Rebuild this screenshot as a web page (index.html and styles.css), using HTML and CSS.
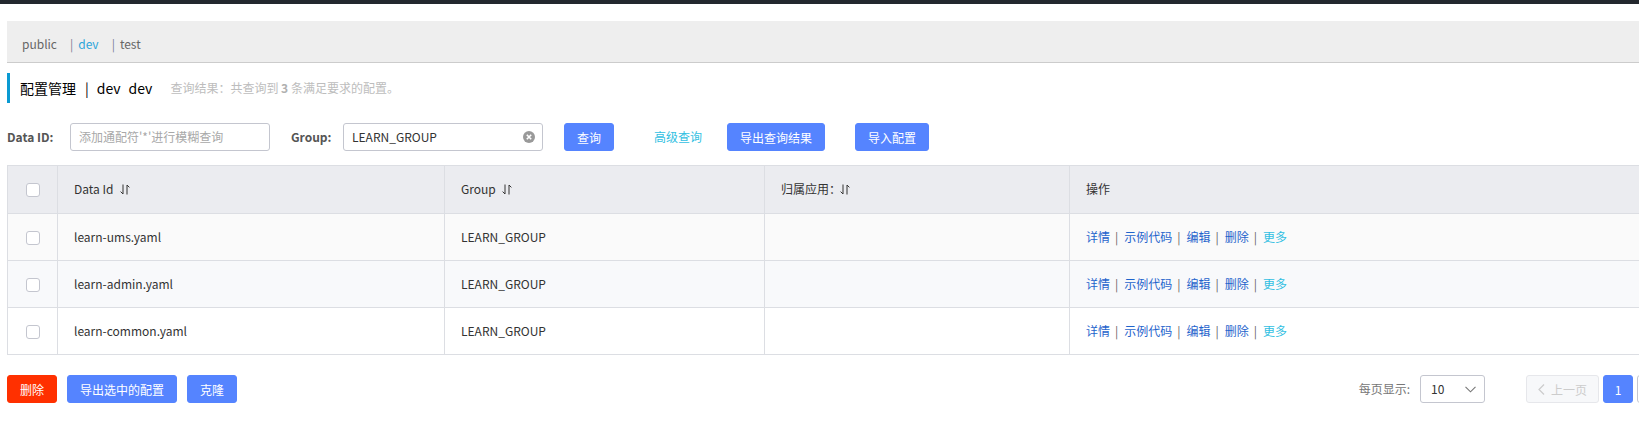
FILE: index.html
```html
<!DOCTYPE html>
<html lang="zh-CN">
<head>
<meta charset="utf-8">
<title>配置管理</title>
<link rel="stylesheet" href="styles.css">
</head>
<body>
<div class="topbar"></div>
<div class="page">
  <div class="ns-bar">
    <span class="ns">public</span>
    <span class="ns"><span class="sep">|</span><span class="ns-active">dev</span></span>
    <span class="ns"><span class="sep">|</span>test</span>
  </div>

  <div class="title">
    <span class="title-main">配置管理</span>
    <span class="title-sep">|</span>
    <span class="title-ns">dev</span>
    <span class="title-ns second">dev</span>
    <span class="title-desc">查询结果：共查询到 <strong>3</strong> 条满足要求的配置。</span>
  </div>

  <div class="search">
    <label class="lbl lbl-id">Data ID:</label>
    <div class="input"><span class="placeholder">添加通配符'*'进行模糊查询</span></div>
    <label class="lbl lbl-group">Group:</label>
    <div class="input"><span class="value">LEARN_GROUP</span>
      <svg class="clear" width="12" height="12" viewBox="0 0 12 12"><circle cx="6" cy="6" r="6" fill="#999"/><path d="M3.8 3.8L8.2 8.2M8.2 3.8L3.8 8.2" stroke="#fff" stroke-width="1.6"/></svg>
    </div>
    <button class="btn primary btn-query">查询</button>
    <a class="adv-link">高级查询</a>
    <button class="btn primary btn-export">导出查询结果</button>
    <button class="btn primary btn-import">导入配置</button>
  </div>

  <table class="grid">
    <colgroup>
      <col class="c-check"><col class="c-id"><col class="c-group"><col class="c-app"><col class="c-op">
    </colgroup>
    <thead>
      <tr>
        <th class="check"><span class="cb"></span></th>
        <th>Data Id <svg class="sort" width="10" height="11" viewBox="0 0 10 11"><path d="M3 0.5V10M3 10L0.6 7.6M7 10.5V1M7 1L9.4 3.4" stroke="#333" stroke-width="1" fill="none"/></svg></th>
        <th>Group <svg class="sort" width="10" height="11" viewBox="0 0 10 11"><path d="M3 0.5V10M3 10L0.6 7.6M7 10.5V1M7 1L9.4 3.4" stroke="#333" stroke-width="1" fill="none"/></svg></th>
        <th>归属应用：<svg class="sort tight" width="10" height="11" viewBox="0 0 10 11"><path d="M3 0.5V10M3 10L0.6 7.6M7 10.5V1M7 1L9.4 3.4" stroke="#333" stroke-width="1" fill="none"/></svg></th>
        <th>操作</th>
      </tr>
    </thead>
    <tbody>
      <tr class="r1">
        <td class="check"><span class="cb"></span></td>
        <td>learn-ums.yaml</td>
        <td>LEARN_GROUP</td>
        <td></td>
        <td class="ops"><a>详情</a><span class="pipe">|</span><a>示例代码</a><span class="pipe">|</span><a>编辑</a><span class="pipe">|</span><a>删除</a><span class="pipe">|</span><a class="more">更多</a></td>
      </tr>
      <tr class="r2">
        <td class="check"><span class="cb"></span></td>
        <td>learn-admin.yaml</td>
        <td>LEARN_GROUP</td>
        <td></td>
        <td class="ops"><a>详情</a><span class="pipe">|</span><a>示例代码</a><span class="pipe">|</span><a>编辑</a><span class="pipe">|</span><a>删除</a><span class="pipe">|</span><a class="more">更多</a></td>
      </tr>
      <tr class="r3">
        <td class="check"><span class="cb"></span></td>
        <td>learn-common.yaml</td>
        <td>LEARN_GROUP</td>
        <td></td>
        <td class="ops"><a>详情</a><span class="pipe">|</span><a>示例代码</a><span class="pipe">|</span><a>编辑</a><span class="pipe">|</span><a>删除</a><span class="pipe">|</span><a class="more">更多</a></td>
      </tr>
    </tbody>
  </table>

  <div class="footer">
    <div class="batch">
      <button class="btn danger">删除</button>
      <button class="btn primary">导出选中的配置</button>
      <button class="btn primary">克隆</button>
    </div>
    <div class="pager">
      <span class="page-size-label">每页显示:</span>
      <div class="select"><span>10</span>
        <svg width="11" height="7" viewBox="0 0 11 7"><path d="M0.5 0.8L5.5 5.8L10.5 0.8" stroke="#777" stroke-width="1.1" fill="none"/></svg>
      </div>
      <button class="pg prev"><svg width="7" height="11" viewBox="0 0 7 11"><path d="M6 0.5L1 5.5L6 10.5" stroke="#ccc" stroke-width="1.2" fill="none"/></svg>上一页</button>
      <button class="pg current">1</button>
      <button class="pg next">下一页<svg width="7" height="11" viewBox="0 0 7 11"><path d="M1 0.5L6 5.5L1 10.5" stroke="#333" stroke-width="1.2" fill="none"/></svg></button>
    </div>
  </div>
</div>
</body>
</html>
```
FILE: styles.css
```css
* { box-sizing: border-box; }
html, body { margin: 0; padding: 0; overflow: hidden; background: #fff; }
body {
  font-family: "Noto Sans CJK SC", "Liberation Sans", sans-serif;
  font-size: 12px;
  color: #333;
  line-height: 1.2;
}
.topbar { height: 4px; background: #23282e; }
.page { margin-left: 7px; width: 1703px; }

.ns-bar {
  margin-top: 17px;
  height: 42px;
  background: #eee;
  border-bottom: 1px solid #ccc;
  display: flex;
  align-items: center;
  padding-left: 15px;
  padding-top: 5px;
  color: #666;
}
.ns { margin-right: 13px; }
.sep { margin-right: 5px; color: #7a7f96; }
.ns-active { color: #2ea6da; }

.title {
  margin-top: 10px;
  height: 30px;
  border-left: 3px solid #0a9ad2;
  padding-left: 10px;
  display: flex;
  align-items: center;
}
.title-main, .title-sep, .title-ns { font-size: 14px; color: #000; }
.title-sep { margin: 0 8px 0 9px; }
.title-ns.second { margin-left: 8px; }
.title-desc { margin-left: 18px; color: #bdbdbd; font-size: 12px; }
.title-desc strong { color: #b0b0b0; }

.search { margin-top: 20px; display: flex; align-items: center; height: 28px; }
.lbl { font-weight: bold; color: #555; }
.lbl-id { width: 63px; }
.lbl-group { width: 52px; margin-left: 21px; }
.input {
  width: 200px; height: 28px;
  border: 1px solid #c4c6cf; border-radius: 3px;
  display: flex; align-items: center; justify-content: space-between;
  padding: 0 8px;
}
.placeholder { color: #a8a8a8; }
.value { color: #333; }
.clear { margin-right: -1px; }

.btn {
  height: 28px; padding: 0 12px;
  border: 1px solid transparent; border-radius: 3px;
  font-family: inherit; font-size: 12px; color: #fff; cursor: pointer;
}
.btn.primary { background: #5584ff; border-color: #5584ff; }
.btn.danger { background: #ff3000; border-color: #ff3000; }
.btn-query { margin-left: 21px; }
.adv-link { margin-left: 40px; color: #33bfe2; }
.btn-export { margin-left: 25px; }
.btn-import { margin-left: 30px; }

.grid {
  margin-top: 14px;
  width: 1703px;
  border-collapse: collapse;
  table-layout: fixed;
}
.c-check { width: 50px; }
.c-id { width: 387px; }
.c-group { width: 320px; }
.c-app { width: 305px; }
.c-op { width: 641px; }
.grid th, .grid td {
  border: 1px solid #dcdee3;
  padding: 0 16px;
  text-align: left;
  font-weight: normal;
  color: #333;
}
.grid th { background: #ebecf0; height: 48px; }
.grid td { height: 47px; }
.grid .r1 td { background: #fafafa; }
.grid .r2 td { background: #f8f9fb; }
.grid .r3 td { background: #fff; }
.grid .check { padding: 0; text-align: center; }
.cb {
  display: inline-block; width: 14px; height: 14px;
  border: 1px solid #c4c6cf; border-radius: 3px; background: #fff;
  vertical-align: middle;
}
.sort { vertical-align: -1px; margin-left: 4px; }
.sort.tight { margin-left: -1px; }
.ops a { color: #1f64cc; }
.ops a.more { color: #33bfe2; }
.pipe { color: #666; margin: 0 6px 0 5px; }

.footer {
  margin-top: 20px;
  display: flex; justify-content: space-between; align-items: center;
}
.batch { display: flex; gap: 10px; }
.pager { display: flex; align-items: center; }
.page-size-label { color: #777; margin-right: 10px; }
.select {
  width: 65px; height: 28px;
  border: 1px solid #c4c6cf; border-radius: 3px;
  display: flex; align-items: center; justify-content: space-between;
  padding: 0 8px 0 10px; color: #333;
}
.pg {
  height: 28px; border-radius: 3px; font-family: inherit; font-size: 12px;
  display: flex; align-items: center; justify-content: center; gap: 6px;
  padding: 0;
}
.pg.prev { width: 73px; margin-left: 41px; background: #f7f8fa; border: 1px solid #e6e7eb; color: #ccc; }
.pg.current { width: 30px; margin-left: 4px; background: #5584ff; border: 1px solid #5584ff; color: #fff; }
.pg.next { width: 73px; margin-left: 4px; background: #fff; border: 1px solid #c4c6cf; color: #333; }
```
